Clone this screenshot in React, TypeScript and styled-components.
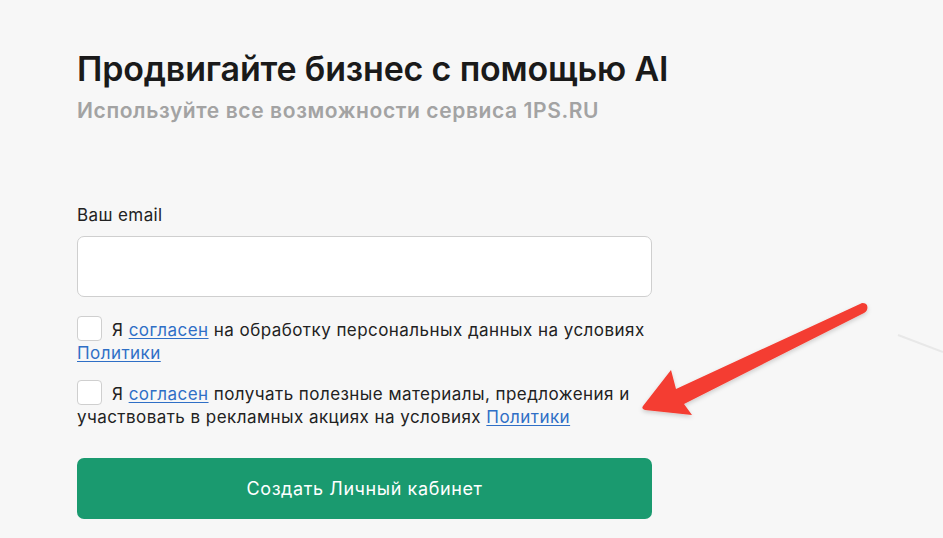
import React from "react";
import styled, { createGlobalStyle } from "styled-components";

const GlobalStyle = createGlobalStyle`
  html, body {
    margin: 0;
    padding: 0;
    background: #f7f7f7;
    font-family: Inter, "Noto Sans", sans-serif;
    color: #1d1d1f;
  }
  * { box-sizing: border-box; }
`;

const Page = styled.div`
  position: relative;
  width: 943px;
  height: 538px;
  overflow: hidden;
  padding: 48px 0 0 77px;
`;

const Form = styled.form`
  width: 575px;
  display: flex;
  flex-direction: column;
`;

const Title = styled.h1`
  margin: 0;
  font-size: 34px;
  font-weight: 600;
  line-height: 42px;
  letter-spacing: -0.17px;
  color: #1a1a1a;
  white-space: nowrap;
`;

const Subtitle = styled.p`
  margin: 8px 0 0;
  font-size: 21px;
  font-weight: 600;
  line-height: 26px;
  letter-spacing: 0.6px;
  color: #a3a3a3;
  white-space: nowrap;
`;

const Label = styled.label`
  margin-top: 81px;
  font-size: 17px;
  line-height: 20px;
  letter-spacing: 0.4px;
  color: #222;
`;

const Input = styled.input`
  margin-top: 11px;
  height: 61px;
  border: 1px solid #cfcfcf;
  border-radius: 7px;
  background: #fff;
  padding: 0 16px;
  font: inherit;
  outline: none;
`;

const Consent = styled.div<{ $top: number }>`
  margin-top: ${(p) => p.$top}px;
  font-size: 17px;
  line-height: 23px;
  letter-spacing: 0.45px;
  color: #222;
`;

const Box = styled.span`
  display: inline-block;
  width: 25px;
  height: 25px;
  vertical-align: -5px;
  margin-right: 10px;
  border: 1px solid #cfcfcf;
  border-radius: 4px;
  background: #fff;
`;

const Link = styled.a`
  color: #2f6fc6;
  text-decoration: underline;
  text-underline-offset: 2px;
`;

const Button = styled.button`
  margin-top: 29px;
  height: 61px;
  border: none;
  border-radius: 7px;
  background: #1a9a6f;
  color: #fff;
  font: inherit;
  font-size: 18px;
  letter-spacing: 0.6px;
`;

const Arrow = styled.svg`
  position: absolute;
  left: 0;
  top: 0;
  pointer-events: none;
`;

export default function App() {
  return (
    <>
      <GlobalStyle />
      <Page>
        <Form onSubmit={(e) => e.preventDefault()}>
          <Title>Продвигайте бизнес с помощью AI</Title>
          <Subtitle>Используйте все возможности сервиса 1PS.RU</Subtitle>
          <Label htmlFor="email">Ваш email</Label>
          <Input id="email" type="email" />
          <Consent $top={19}>
            <Box />Я <Link href="#">согласен</Link> на обработку персональных данных на условиях{" "}
            <Link href="#">Политики</Link>
          </Consent>
          <Consent $top={15}>
            <Box />Я <Link href="#">согласен</Link> получать полезные материалы, предложения и
            участвовать в рекламных акциях на условиях <Link href="#">Политики</Link>
          </Consent>
          <Button type="submit">Создать Личный кабинет</Button>
        </Form>
        <Arrow width="943" height="538" viewBox="0 0 943 538">
          <defs>
            <filter id="sh" x="-10%" y="-10%" width="120%" height="130%">
              <feDropShadow dx="0" dy="2" stdDeviation="2" floodColor="#000" floodOpacity="0.18" />
            </filter>
          </defs>
          <line x1="898" y1="335" x2="943" y2="352" stroke="#e8e8e8" strokeWidth="2" />
          <path
            filter="url(#sh)"
            fill="#f43c30"
            d="M862 303 Q869 303 867 310 Q866 312 864 313 L684 404 L692 415 L645 410 Q641 409 643 406 L671 370 L676 389 L860 304 Z"
          />
        </Arrow>
      </Page>
    </>
  );
}
